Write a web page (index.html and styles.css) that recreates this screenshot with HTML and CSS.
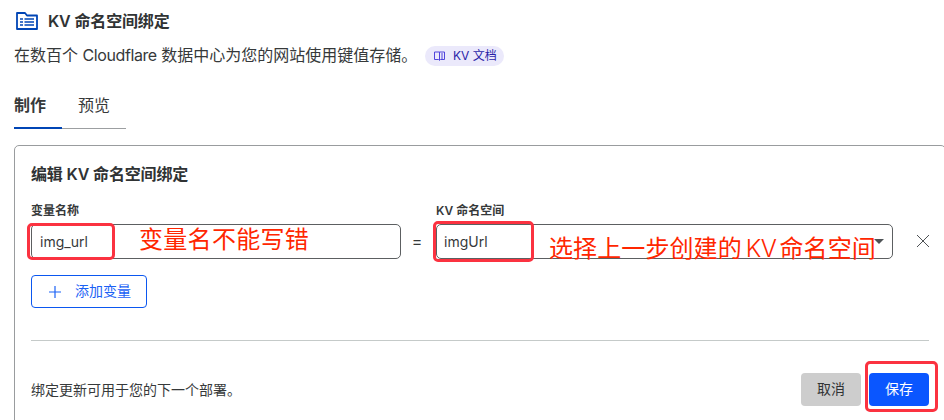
FILE: index.html
```html
<!DOCTYPE html>
<html lang="zh-CN">
<head>
<meta charset="utf-8">
<title>KV 命名空间绑定</title>
<link rel="stylesheet" href="styles.css">
</head>
<body>
<main class="page">
  <header class="heading">
    <svg class="heading-icon" width="22" height="18" viewBox="0 0 22 18" fill="none" stroke="#0045b5">
      <path d="M1 17V1h8l2 2.500h10V17z" stroke-width="1.800" stroke-linejoin="round"/>
      <path d="M4 6.900h3M4 10h3M4 13.100h3M8.500 6.900H18M8.500 10H18M8.500 13.100H18" stroke-width="1.500"/>
    </svg>
    <h1 class="title">KV 命名空间绑定</h1>
  </header>
  <div class="intro">
    <p class="intro-text">在数百个 <span class="brand">Cloudflare</span> 数据中心为您的网站使用键值存储。</p>
    <a class="docs">
      <svg width="11" height="10" viewBox="0 0 11 10" fill="none" stroke="#5145dc" stroke-width="1">
        <path d="M5.500 1H.5v7.500h4l1 .5 1-.5h4V1zM5.500 1v8.500M7 3h2M7 5h2M7 7h2"/>
      </svg>
      <span>KV 文档</span>
    </a>
  </div>
  <nav class="tabs">
    <a class="tab tab-active">制作</a>
    <a class="tab">预览</a>
  </nav>
  <section class="card">
    <h2 class="card-title">编辑 KV 命名空间绑定</h2>
    <div class="binding">
      <div class="field field-name">
        <label class="label">变量名称</label>
        <div class="control">img_url
          <span class="mark mark-name"></span>
          <span class="note note-name">变量名不能写错</span>
        </div>
      </div>
      <span class="equals">=</span>
      <div class="field field-space">
        <label class="label">KV 命名空间</label>
        <div class="control control-select">imgUrl
          <svg class="caret" width="10" height="5" viewBox="0 0 10 5"><path d="M0 0h10L5 5z" fill="#4e5255"/></svg>
          <span class="mark mark-space"></span>
          <span class="note note-space">选择上一步创建的<span class="note-latin">KV</span>命名空间</span>
        </div>
      </div>
      <svg class="remove" width="12" height="12" viewBox="0 0 12 12" fill="none" stroke="#4e5255"><path d="M0 0l12 12M12 0L0 12"/></svg>
    </div>
    <button class="add">
      <svg width="12" height="12" viewBox="0 0 12 12" fill="none" stroke="#1b62f5" stroke-width="1.200"><path d="M6 0v12M0 6h12"/></svg>
      <span class="add-text">添加变量</span>
    </button>
    <footer class="footer">
      <p class="footer-text">绑定更新可用于您的下一个部署。</p>
      <button class="button cancel">取消</button>
      <button class="button save">保存<span class="mark mark-save"></span></button>
    </footer>
  </section>
</main>
</body>
</html>
```

FILE: styles.css
```css
* { box-sizing: border-box; }
body {
  margin: 0;
  height: 420px;
  overflow: hidden;
  background: #fff;
  color: #36393a;
  font-family: Inter, "Noto Sans CJK SC", sans-serif;
  font-size: 14px;
}
h1, h2, p { margin: 0; }
button { font: inherit; margin: 0; }
svg { display: block; flex: none; }

.page { width: 946px; padding: 9px 0 0 14px; }
.heading { display: flex; align-items: center; gap: 10px; height: 24px; padding-left: 2px; }
.title { font-size: 16px; line-height: 24px; font-weight: 600; letter-spacing: -.15px; color: #303334; }
.intro { display: flex; align-items: center; gap: 11px; height: 24px; margin-top: 10px; }
.intro-text { font-size: 16px; line-height: 24px; width: 400px; white-space: nowrap; }
.brand { letter-spacing: -.4px; }
.docs {
  display: flex; align-items: center; gap: 8px;
  width: 79px; height: 20px; margin-top: 2px; padding-left: 9px;
  border-radius: 10px; background: #ebe9fb; color: #2a1fa8;
  font-size: 12px; line-height: 20px; white-space: nowrap;
}
.tabs { display: flex; width: 112px; height: 36px; margin-top: 26px; box-shadow: inset 0 -1px #9c9fa1; }
.tab { width: 64px; padding-left: 16px; font-size: 16px; line-height: 24px; }
.tab-active { width: 48px; padding-left: 0; font-weight: 600; border-bottom: 2px solid #0045b5; }

.card { width: 932px; height: 290px; margin-top: 16px; padding: 16px; border: 1px solid #999c9e; border-radius: 5px; }
.card-title { font-size: 16px; line-height: 24px; font-weight: 600; letter-spacing: -.15px; color: #303334; }
.binding { display: flex; align-items: flex-end; margin-top: 17px; }
.label { display: block; margin-bottom: 5px; font-size: 12px; line-height: 16px; font-weight: 600; }
.field-name { width: 370px; }
.field-space { width: 457px; }
.control {
  position: relative; height: 35px; padding-left: 8px;
  border: 1px solid #5c5f61; border-radius: 5px;
  line-height: 33px; white-space: nowrap;
}
.control-select { padding-left: 7px; }
.equals { width: 35px; padding-right: 3px; font-size: 16px; line-height: 35px; text-align: center; }
.caret { position: absolute; right: 8px; top: 14px; }
.remove { margin: 0 0 12px 24px; }
.mark { position: absolute; border: 3px solid #fb3240; border-radius: 5px; }
.mark-name { left: -5px; top: -2px; width: 88px; height: 37px; }
.mark-space { left: -4px; top: -4px; width: 101px; height: 41px; }
.mark-save { left: -4px; top: -12px; width: 73px; height: 51px; }
.note { position: absolute; color: #ff2600; font-size: 24px; line-height: 36px; letter-spacing: .3px; }
.note-name { left: 107px; top: -3px; }
.note-space { left: 112px; top: 6px; letter-spacing: .1px; }
.note-latin { margin: 0 3px 0 4px; font-weight: 300; letter-spacing: -.5px; }
.add {
  display: flex; align-items: center; gap: 14px;
  width: 116px; height: 33px; margin-top: 16px; padding: 0 0 0 17px;
  border: 1px solid #0b57f0; border-radius: 4px; background: #fff;
  color: #1b62f5; white-space: nowrap;
}
.add-text { padding-bottom: 3px; }
.footer { display: flex; align-items: center; gap: 8px; margin-top: 32px; padding-top: 32px; border-top: 1px solid #c5cac9; }
.footer-text { flex: 1; line-height: 20px; }
.button { position: relative; width: 60px; height: 33px; padding: 0 0 3px; border: 0; border-radius: 4px; }
.cancel { background: #cdcdcd; color: #303334; }
.save { background: #0a56ff; color: #fff; }
```
